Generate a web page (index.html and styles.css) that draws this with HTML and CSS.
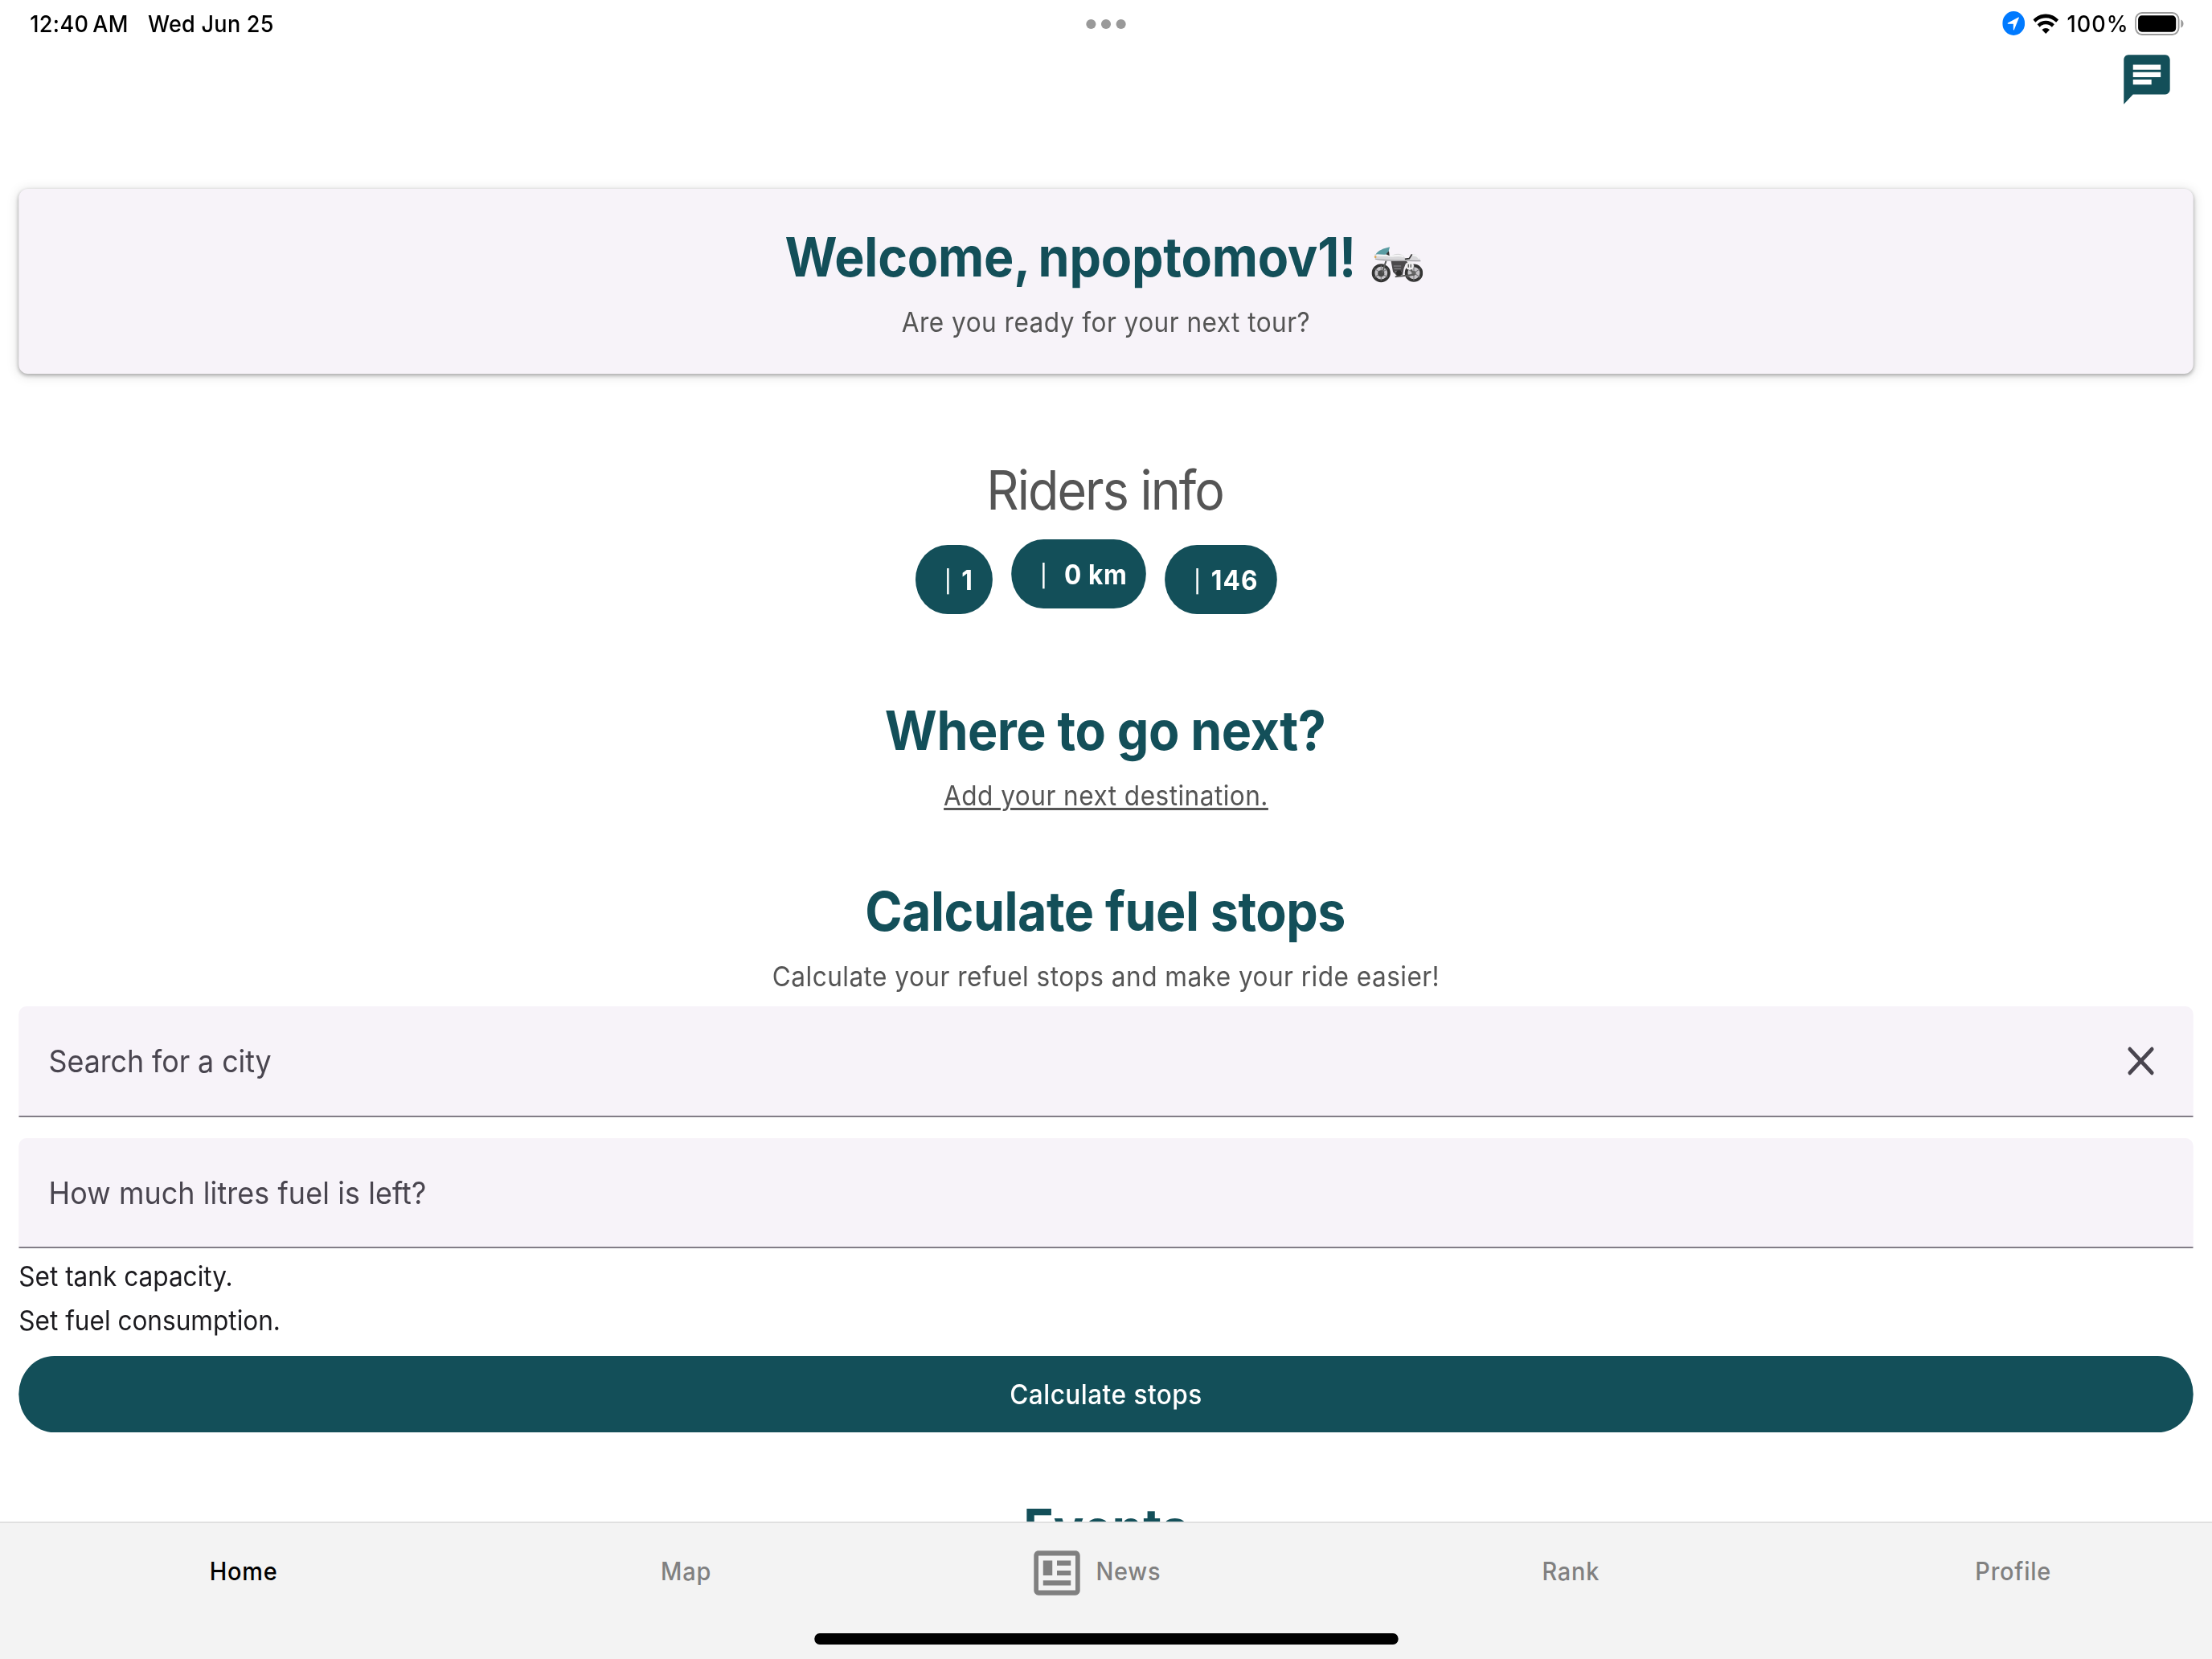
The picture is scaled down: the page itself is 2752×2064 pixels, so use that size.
FILE: index.html
```html
<!DOCTYPE html>
<html lang="en">

<head>
    <meta charset="utf-8">
    <meta name="viewport" content="width=device-width, initial-scale=1.0">
    <title>Home</title>
    <link rel="stylesheet" href="styles.css">
</head>

<body>
    <div class="screen">

        <div class="statusbar">
            <div class="status-left">
                <span class="time">12:40 AM</span>
                <span>Wed Jun 25</span>
            </div>
            <div class="dots"><i></i><i></i><i></i></div>
            <div class="status-right">
                <svg class="location" viewBox="0 0 30 30">
                    <circle cx="15" cy="15" r="15" fill="#007aff" />
                    <path d="M22.3 7.7 L15.6 23.2 Q14.8 24 14.6 22.6 V15.8 H7.6 Q6 15.4 7.3 14.6 L21.4 7.6 Q22.4 7.2 22.3 7.7Z" fill="#fff" />
                </svg>
                <svg class="wifi" viewBox="0 0 34 25">
                    <g fill="none" stroke="#000" stroke-width="4.6">
                        <path d="M1.6 9.2 A22 22 0 0 1 32.4 9.2" />
                        <path d="M7.2 15 A14 14 0 0 1 26.8 15" />
                    </g>
                    <path d="M17 25 L11.9 20 A7.4 7.4 0 0 1 22.1 20Z" />
                </svg>
                <span class="percent">100%</span>
                <svg class="battery" viewBox="0 0 66 29">
                    <rect x="1" y="1" width="57.5" height="27" rx="8.5" fill="none" stroke="#9b9b9b" stroke-width="2" />
                    <rect x="4.3" y="4.3" width="50.6" height="20.4" rx="5" />
                    <path d="M61.5 9.5 C66 11 66 18 61.5 19.5Z" fill="#9b9b9b" />
                </svg>
            </div>
        </div>

        <header>
            <svg class="chat" viewBox="0 0 24 24">
                <path d="M20 2H4c-1.1 0-1.99.9-1.99 2L2 22l4-4h14c1.1 0 2-.9 2-2V4c0-1.1-.9-2-2-2zM6 9h12v2H6V9zm8 5H6v-2h8v2zm4-6H6V6h12v2z" />
            </svg>
        </header>

        <main>
            <section class="card">
                <h1>Welcome, npoptomov1!
                    <svg class="bike" viewBox="80 78 191 138" preserveAspectRatio="none">
                        <circle cx="116" cy="176" r="29" fill="#c4c2c6" stroke="#343434" stroke-width="11" />
                        <circle cx="237" cy="176" r="28" fill="#c4c2c6" stroke="#343434" stroke-width="11" />
                        <path d="M116 148V204M92 160L140 192M92 192L140 160M237 148V204M213 160L261 192M213 192L261 160" stroke="#77767a" stroke-width="3" />
                        <circle cx="116" cy="178" r="12" fill="#4a4a4a" />
                        <circle cx="237" cy="176" r="8" fill="#666" />
                        <path d="M136 126L120 176M206 130L232 172M168 190L240 182" stroke="#5b5b5b" stroke-width="6" fill="none" />
                        <path d="M152 128H212L200 160L196 182L176 188L160 172Z" fill="#4b494c" />
                        <path d="M162 150H190M164 160H190M168 170H192" stroke="#8f8d91" stroke-width="3" />
                        <circle cx="182" cy="176" r="10" fill="#2c2c2c" />
                        <path d="M92 106L140 106C148 108 152 114 156 112C162 104 192 98 202 116L206 122H222L230 106C246 104 258 112 262 132L150 131C120 132 94 130 92 118Z" fill="#d9d8db" />
                        <path d="M98 110H138C150 118 190 104 198 116M232 110C244 108 254 114 256 122" stroke="#f6f6f7" stroke-width="6" fill="none" />
                        <path d="M94 123C112 130 150 128 262 131" stroke="#a09fa3" stroke-width="4" fill="none" />
                        <path d="M204 124L220 122L230 106" stroke="#333" stroke-width="5" fill="none" />
                        <path d="M96 107C104 92 126 84 148 79L143 98L132 107C118 108 106 104 96 107Z" fill="#5b9ca3" />
                        <path d="M134 106L145 94L147 112Z" fill="#333" />
                        <circle cx="95" cy="116" r="4" fill="#e0a850" />
                        <circle cx="222" cy="149" r="15" fill="#efeef0" />
                        <path d="M217 143V155M226 143V155" stroke="#555" stroke-width="4" />
                    </svg>
                </h1>
                <p class="sub">Are you ready for your next tour?</p>
            </section>

            <section class="riders">
                <h2 class="light">Riders info</h2>
                <div class="pills">
                    <div class="pill"><span class="bar">|</span><b>1</b></div>
                    <div class="pill km"><span class="bar">|</span><b>0 km</b></div>
                    <div class="pill"><span class="bar">|</span><b>146</b></div>
                </div>
            </section>

            <section class="next">
                <h2>Where to go next?</h2>
                <p class="sub"><a>Add your next destination.</a></p>
            </section>

            <section class="fuel">
                <h2>Calculate fuel stops</h2>
                <p class="sub">Calculate your refuel stops and make your ride easier!</p>
                <div class="field">
                    <span>Search for a city</span>
                    <svg class="close" viewBox="0 0 24 24">
                        <path d="M6.1 6.1L17.9 17.9M17.9 6.1L6.1 17.9" />
                    </svg>
                </div>
                <div class="field">
                    <span>How much litres fuel is left?</span>
                </div>
                <p class="set">Set tank capacity.</p>
                <p class="set">Set fuel consumption.</p>
                <button class="calc">Calculate stops</button>
            </section>

            <section class="events">
                <h2>Events</h2>
            </section>
        </main>

        <footer>
            <nav>
                <a class="tab active"><i></i>Home</a>
                <a class="tab"><i></i>Map</a>
                <a class="tab"><i>
                    <svg viewBox="0 0 24 24">
                        <path d="M20 5V19H4V5H20M20 3H4C2.89 3 2 3.89 2 5V19C2 20.11 2.89 21 4 21H20C21.11 21 22 20.11 22 19V5C22 3.89 21.11 3 20 3M18 15H6V17H18V15M10 7H6V13H10V7M12 9H18V7H12V9M18 11H12V13H18V11Z" />
                    </svg></i>News</a>
                <a class="tab"><i></i>Rank</a>
                <a class="tab"><i></i>Profile</a>
            </nav>
            <div class="home-indicator"></div>
        </footer>

    </div>
</body>

</html>
```
FILE: styles.css
```css
* {
    box-sizing: border-box;
}

html {
    overflow: hidden;
}

body {
    margin: 0;
    width: 100%;
    height: 2064px;
    overflow: hidden;
    background: #fff;
}

/* 1194:834 tablet layout, squeezed to the width of a 4:3 screen */
.screen {
    width: 2955px;
    height: 2064px;
    display: flex;
    flex-direction: column;
    transform: scaleX(.9313);
    transform-origin: 0 0;
    font-family: Inter, "Liberation Sans", sans-serif;
    font-size: 33.9px;
    color: #1c1b1f;
}

svg {
    display: block;
    flex: none;
}

h1, h2, p {
    margin: 0;
    text-align: center;
}

.statusbar {
    display: grid;
    grid-template-columns: 1fr auto 1fr;
    align-items: center;
    flex: none;
    height: 58px;
    padding: 0 37px 0 40px;
    font-size: 29px;
    font-weight: 500;
    color: #000;
    letter-spacing: .01em;
}

.status-left {
    display: flex;
    gap: 26px;
}

.time {
    letter-spacing: .014em;
    word-spacing: -.1em;
}

.dots {
    display: flex;
    gap: 7px;
    margin: 2px 3px 0 0;
}

.dots i {
    width: 13px;
    height: 12px;
    border-radius: 50%;
    background: #999;
}

.status-right {
    display: flex;
    align-items: center;
    justify-content: flex-end;
}

.location {
    width: 30px;
    height: 30px;
    margin-right: 11px;
}

.wifi {
    width: 34px;
    height: 25px;
    margin-right: 11px;
}

.percent {
    letter-spacing: .04em;
    margin-right: 8px;
}

.battery {
    width: 66px;
    height: 29px;
}

header {
    display: flex;
    justify-content: flex-end;
    flex: none;
    padding: 4px 50px 0 0;
    height: 147px;
}

.chat {
    width: 74px;
    height: 74px;
    fill: #134f59;
}

main {
    flex: 1;
    min-height: 0;
    overflow: hidden;
    padding: 30px 25px 0;
}

.card {
    height: 230px;
    padding-top: 40px;
    border-radius: 12px;
    background: #f7f3f9;
    box-shadow: 0 2px 5px rgba(0, 0, 0, .3), 0 2px 15px rgba(0, 0, 0, .15);
}

h1, h2 {
    font-size: 67.3px;
    line-height: 89px;
    font-weight: 700;
    letter-spacing: -.0075em;
    color: #134f59;
}

h1 {
    display: flex;
    justify-content: center;
    align-items: center;
    letter-spacing: -.003em;
    word-spacing: -.05em;
}

.bike {
    width: 69px;
    height: 46px;
    margin: 20px 5px 0 21px;
}

.light {
    font-weight: 400;
    letter-spacing: -.031em;
    color: #555;
}

.sub {
    margin-top: 12px;
    line-height: 50px;
    letter-spacing: .015em;
    color: #555;
}

.sub a {
    text-decoration: underline;
    text-decoration-thickness: 2.5px;
    text-underline-offset: 3px;
}

.riders {
    margin-top: 100px;
}

.riders h2 {
    padding-right: 3px;
}

.pills {
    display: flex;
    justify-content: center;
    align-items: flex-start;
    gap: 25px;
    margin-top: 17px;
    padding-right: 26px;
}

.pill {
    display: flex;
    align-items: center;
    gap: 12px;
    height: 86px;
    margin-top: 7px;
    padding: 0 25px 0 39px;
    border-radius: 43px;
    background: #134f59;
    color: #fff;
    letter-spacing: .04em;
}

.bar {
    width: 11px;
    margin-top: 5px;
    font-size: 27px;
    font-weight: 500;
    letter-spacing: 0;
}

.km {
    gap: 21px;
    margin-top: 0;
    letter-spacing: .02em;
}

.next {
    margin-top: 100px;
}

.fuel {
    margin-top: 74px;
}

.next h2, .fuel h2 {
    padding-right: 2px;
}

.field {
    display: flex;
    align-items: center;
    justify-content: space-between;
    height: 138px;
    margin-top: 12px;
    padding: 0 40px;
    border-bottom: 2px solid #827d87;
    border-radius: 10px 10px 0 0;
    background: #f7f3f9;
    color: #49454f;
    font-size: 38.5px;
    letter-spacing: -.002em;
}

.field + .field {
    height: 137px;
    margin-top: 26px;
    letter-spacing: .003em;
}

.close {
    width: 60px;
    height: 60px;
    stroke: #49454f;
    stroke-width: 2;
    stroke-linecap: round;
}

.set {
    line-height: 55px;
    text-align: left;
}

.field + .set {
    margin-top: 7px;
}

.calc {
    display: block;
    width: 100%;
    height: 95px;
    margin-top: 17px;
    padding: 0;
    border: none;
    border-radius: 48px;
    background: #134f59;
    color: #fff;
    font: inherit;
    font-weight: 500;
    letter-spacing: .015em;
}

.events {
    margin-top: 75px;
}

footer {
    flex: none;
    height: 171px;
    border-top: 2px solid #e0e0e0;
    background: #f3f3f3;
}

nav {
    display: flex;
    height: 119px;
}

.tab {
    flex: 1;
    display: flex;
    justify-content: center;
    align-items: center;
    font-size: 31px;
    font-weight: 500;
    letter-spacing: .028em;
    color: #808080;
}

.tab i {
    display: flex;
    justify-content: flex-end;
    width: 60px;
    margin-top: 4px;
    padding-right: 15px;
}

.tab svg {
    width: 74px;
    height: 74px;
    fill: #808080;
}

.active {
    color: #000;
}

.home-indicator {
    width: 780px;
    height: 14px;
    margin: 18px auto 0;
    border-radius: 7px;
    background: #000;
}
```
